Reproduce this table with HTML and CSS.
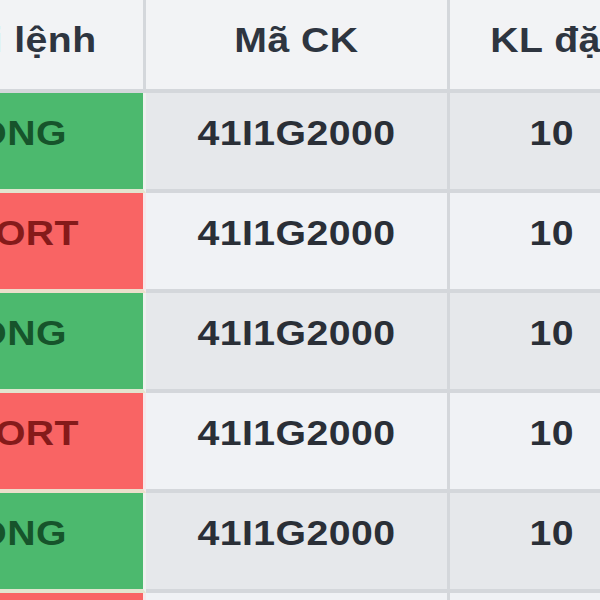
FILE: index.html
```html
<!DOCTYPE html>
<html lang="vi">
<head>
<meta charset="utf-8">
<title>Lệnh đặt</title>
<link rel="stylesheet" href="styles.css">
</head>
<body>
<table class="orders">
  <colgroup>
    <col class="col-type">
    <col class="col-code">
    <col class="col-qty">
  </colgroup>
  <thead>
    <tr>
      <th><span class="t">Loại lệnh</span></th>
      <th><span class="t">Mã CK</span></th>
      <th><span class="t">KL đặt</span></th>
    </tr>
  </thead>
  <tbody>
    <tr class="odd">
      <td class="type long"><span class="t">LONG</span></td>
      <td><span class="t">41I1G2000</span></td>
      <td><span class="t">10</span></td>
    </tr>
    <tr class="even">
      <td class="type short"><span class="t">SHORT</span></td>
      <td><span class="t">41I1G2000</span></td>
      <td><span class="t">10</span></td>
    </tr>
    <tr class="odd">
      <td class="type long"><span class="t">LONG</span></td>
      <td><span class="t">41I1G2000</span></td>
      <td><span class="t">10</span></td>
    </tr>
    <tr class="even">
      <td class="type short"><span class="t">SHORT</span></td>
      <td><span class="t">41I1G2000</span></td>
      <td><span class="t">10</span></td>
    </tr>
    <tr class="odd">
      <td class="type long"><span class="t">LONG</span></td>
      <td><span class="t">41I1G2000</span></td>
      <td><span class="t">10</span></td>
    </tr>
    <tr class="even">
      <td class="type short"><span class="t">SHORT</span></td>
      <td><span class="t">41I1G2000</span></td>
      <td><span class="t">10</span></td>
    </tr>
  </tbody>
</table>
</body>
</html>
```
FILE: styles.css
```css
html, body {
  margin: 0;
  padding: 0;
  background: #eef0f3;
  overflow: hidden;
}

body {
  width: 600px;
  height: 600px;
}

.orders {
  border-collapse: separate;
  border-spacing: 0;
  table-layout: fixed;
  width: 782px;
  margin-left: -125px;
  font-family: "Liberation Sans", Arial, sans-serif;
  font-weight: 700;
  font-size: 35px;
  line-height: 40px;
  color: #2a2f37;
}

.col-type { width: 271px; }
.col-code { width: 304px; }
.col-qty  { width: 207px; }

.orders th,
.orders td {
  padding: 20px 0 0;
  text-align: center;
  vertical-align: top;
  white-space: nowrap;
  overflow: hidden;
  border-right: 3px solid #d4d7db;
  border-bottom: 4px solid #d4d7db;
}

.orders thead tr { height: 93px; }
.orders tbody tr { height: 100px; }

.orders th {
  background: #f2f3f5;
  color: #2e3540;
  font-weight: 700;
}

.odd td  { background: #e6e8eb; }
.even td { background: #f0f2f5; }

.t {
  display: inline-block;
  transform: scaleX(1.12);
  letter-spacing: 0.4px;
}

.odd td.long,
.even td.long,
.type.long {
  background: #4cb96e;
  color: #16542b;
  border-bottom-color: #e2e5cf;
  border-right-color: #eef1ee;
}

.odd td.short,
.even td.short,
.type.short {
  background: #f96464;
  color: #851a1a;
  border-bottom-color: #ecdfcb;
  border-right-color: #f6e7e9;
}
```
